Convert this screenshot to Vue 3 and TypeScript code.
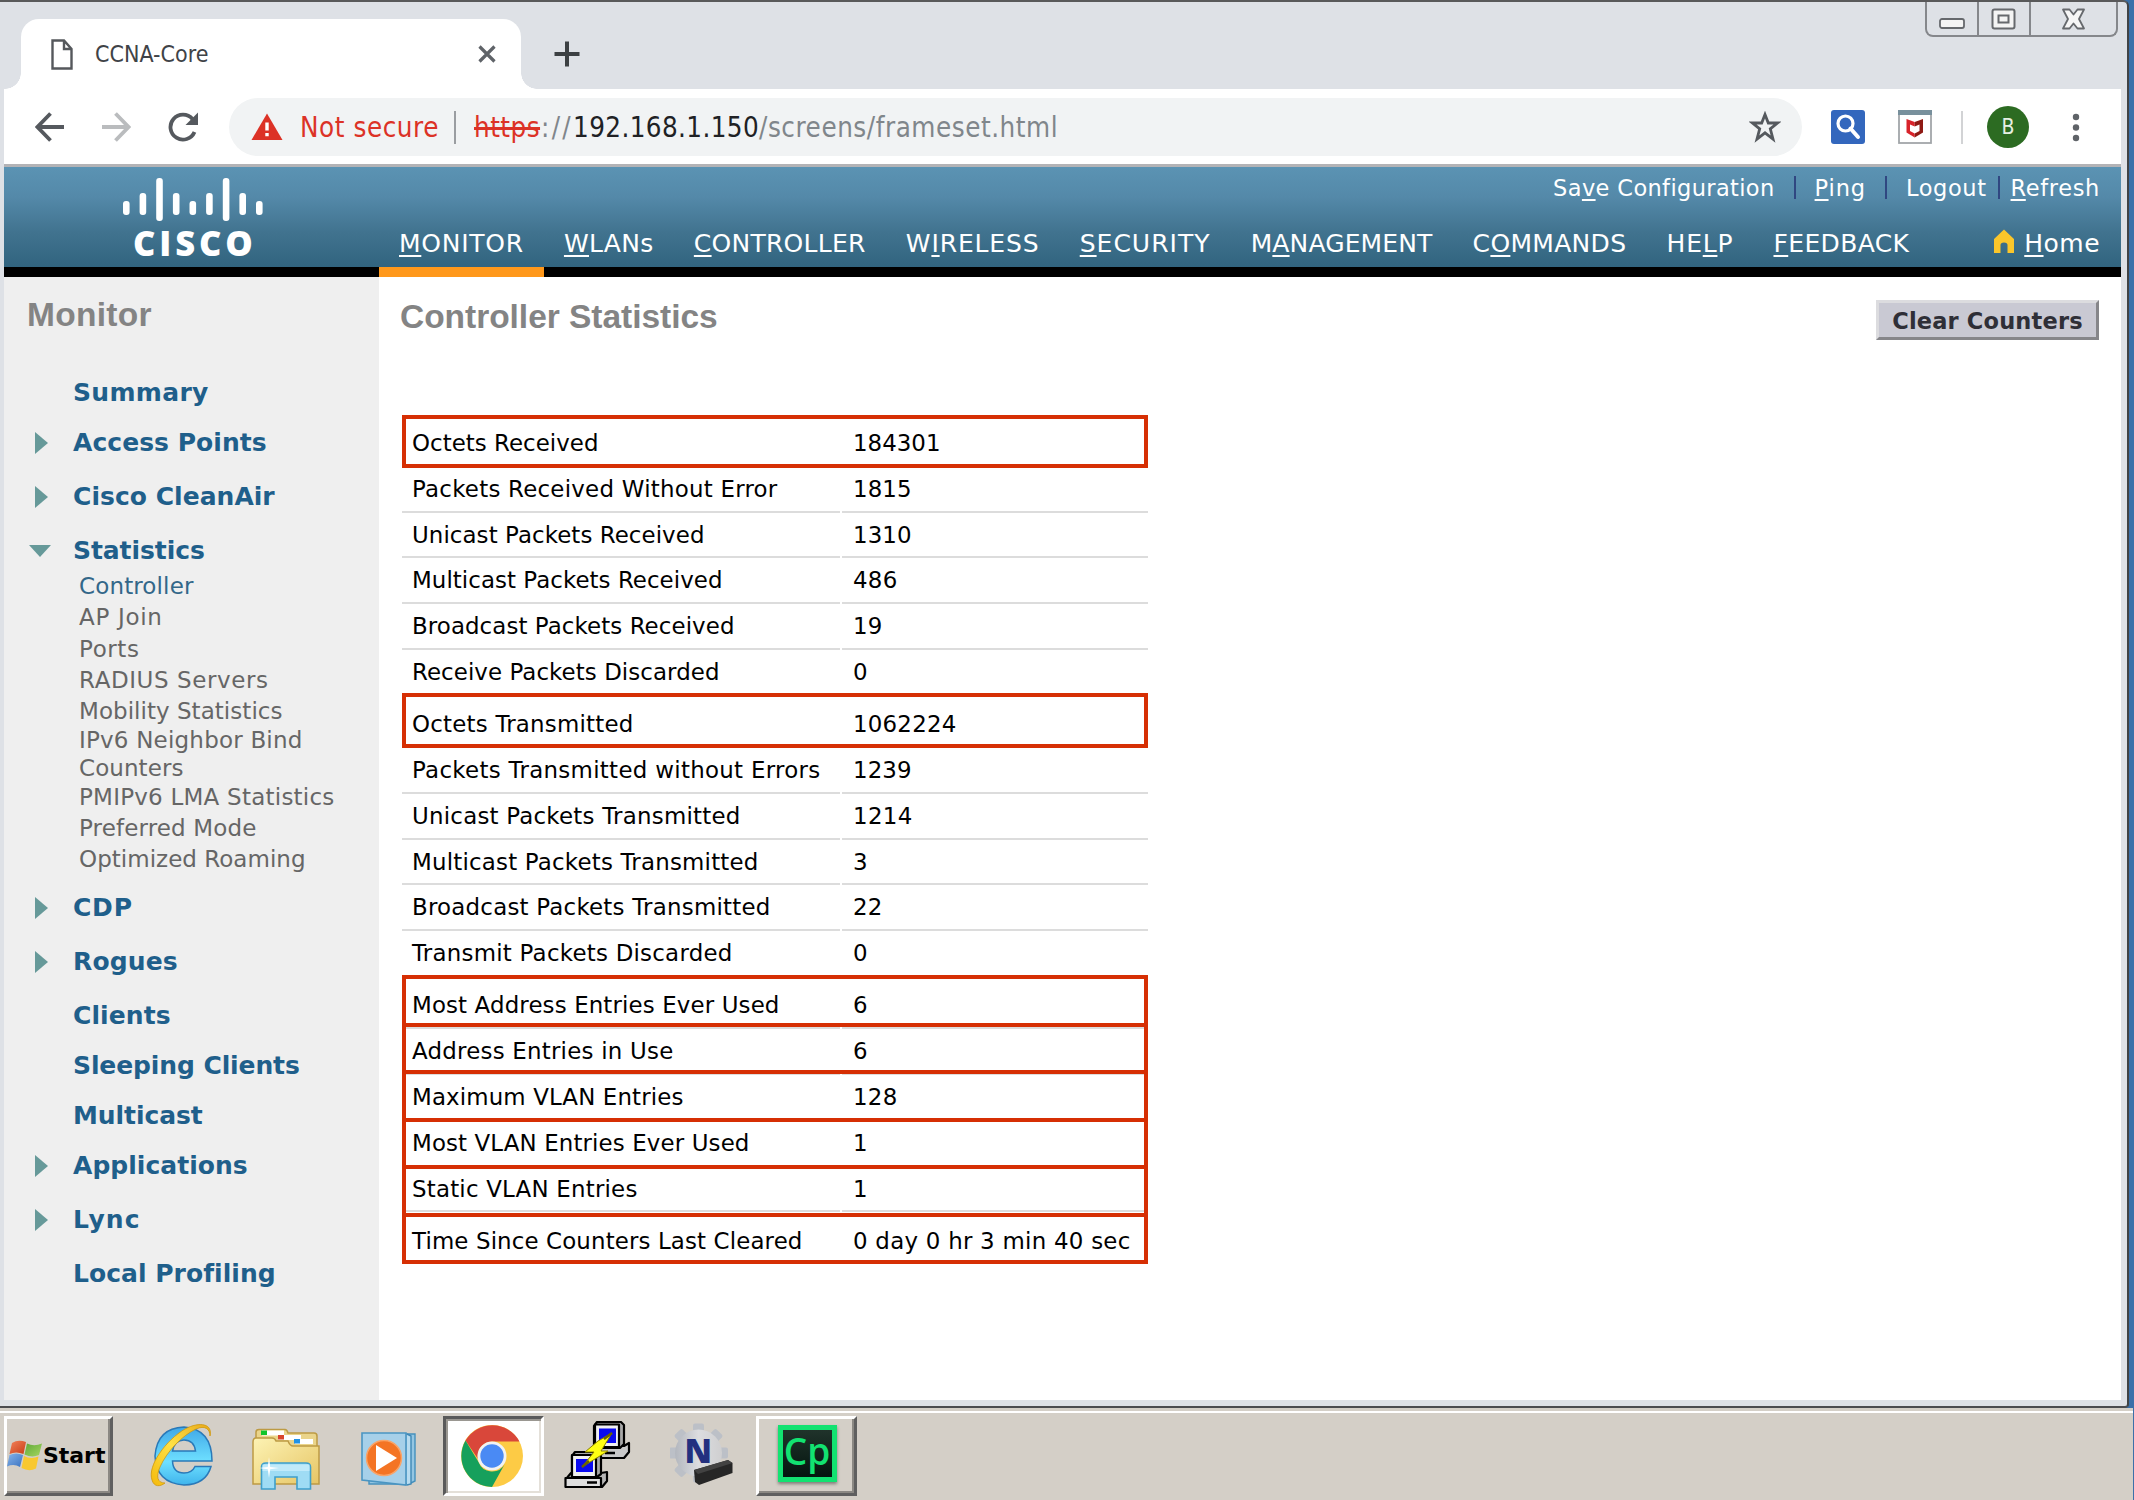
<script setup lang="ts">
interface Keyed { pre: string; key: string; post: string; width: number }
interface SideItem { label: string; width: number; kind: 'leaf' | 'closed' | 'open' }
interface Row { label: string; labelWidth: number; value: string; valueWidth: number; gap?: boolean }

// Tracks a label in or out so that its glyphs span the given number of pixels.
const vFit = {
  mounted(el: HTMLElement, binding: { value: number }) {
    const size = parseFloat(getComputedStyle(el).fontSize)
    const target = binding.value + size * 0.11
    const count = (el.textContent ?? '').length
    const natural = el.getBoundingClientRect().width
    el.style.letterSpacing = `${(target - natural) / count}px`
  },
}

const nav: Keyed[] = [
  { pre: '', key: 'M', post: 'ONITOR', width: 122 },
  { pre: '', key: 'W', post: 'LANs', width: 87 },
  { pre: '', key: 'C', post: 'ONTROLLER', width: 169 },
  { pre: 'W', key: 'I', post: 'RELESS', width: 131 },
  { pre: '', key: 'S', post: 'ECURITY', width: 128 },
  { pre: 'M', key: 'A', post: 'NAGEMENT', width: 179 },
  { pre: 'C', key: 'O', post: 'MMANDS', width: 151 },
  { pre: 'HE', key: 'L', post: 'P', width: 64 },
  { pre: '', key: 'F', post: 'EEDBACK', width: 133 },
]

const sideTop: SideItem[] = [
  { label: 'Summary', width: 133, kind: 'leaf' },
  { label: 'Access Points', width: 191, kind: 'closed' },
  { label: 'Cisco CleanAir', width: 199, kind: 'closed' },
  { label: 'Statistics', width: 129, kind: 'open' },
]
const sideBottom: SideItem[] = [
  { label: 'CDP', width: 57, kind: 'closed' },
  { label: 'Rogues', width: 102, kind: 'closed' },
  { label: 'Clients', width: 95, kind: 'leaf' },
  { label: 'Sleeping Clients', width: 224, kind: 'leaf' },
  { label: 'Multicast', width: 127, kind: 'leaf' },
  { label: 'Applications', width: 172, kind: 'closed' },
  { label: 'Lync', width: 65, kind: 'closed' },
  { label: 'Local Profiling', width: 199, kind: 'leaf' },
]
const subItems = [
  { lines: [{ t: 'Controller', w: 112 }], active: true },
  { lines: [{ t: 'AP Join', w: 81 }] },
  { lines: [{ t: 'Ports', w: 58 }] },
  { lines: [{ t: 'RADIUS Servers', w: 187 }] },
  { lines: [{ t: 'Mobility Statistics', w: 201 }] },
  { lines: [{ t: 'IPv6 Neighbor Bind', w: 221 }, { t: 'Counters', w: 102 }] },
  { lines: [{ t: 'PMIPv6 LMA Statistics', w: 253 }] },
  { lines: [{ t: 'Preferred Mode', w: 175 }] },
  { lines: [{ t: 'Optimized Roaming', w: 224 }] },
]

const rows: Row[] = [
  { label: 'Octets Received', labelWidth: 184, value: '184301', valueWidth: 85 },
  { label: 'Packets Received Without Error', labelWidth: 363, value: '1815', valueWidth: 56 },
  { label: 'Unicast Packets Received', labelWidth: 290, value: '1310', valueWidth: 56 },
  { label: 'Multicast Packets Received', labelWidth: 308, value: '486', valueWidth: 42 },
  { label: 'Broadcast Packets Received', labelWidth: 320, value: '19', valueWidth: 27 },
  { label: 'Receive Packets Discarded', labelWidth: 305, value: '0', valueWidth: 13 },
  { label: 'Octets Transmitted', labelWidth: 219, value: '1062224', valueWidth: 101, gap: true },
  { label: 'Packets Transmitted without Errors', labelWidth: 406, value: '1239', valueWidth: 56 },
  { label: 'Unicast Packets Transmitted', labelWidth: 326, value: '1214', valueWidth: 57 },
  { label: 'Multicast Packets Transmitted', labelWidth: 344, value: '3', valueWidth: 13 },
  { label: 'Broadcast Packets Transmitted', labelWidth: 356, value: '22', valueWidth: 27 },
  { label: 'Transmit Packets Discarded', labelWidth: 318, value: '0', valueWidth: 13 },
  { label: 'Most Address Entries Ever Used', labelWidth: 365, value: '6', valueWidth: 13, gap: true },
  { label: 'Address Entries in Use', labelWidth: 259, value: '6', valueWidth: 13 },
  { label: 'Maximum VLAN Entries', labelWidth: 269, value: '128', valueWidth: 42 },
  { label: 'Most VLAN Entries Ever Used', labelWidth: 335, value: '1', valueWidth: 13 },
  { label: 'Static VLAN Entries', labelWidth: 223, value: '1', valueWidth: 13 },
  { label: 'Time Since Counters Last Cleared', labelWidth: 388, value: '0 day 0 hr 3 min 40 sec', valueWidth: 275, gap: true },
]

// Red call-outs drawn over the table, relative to its top edge.
const marks = [
  { top: -6, height: 53 },
  { top: 272, height: 55 },
  { top: 554, height: 52 },
  { top: 602, height: 51 },
  { top: 649, height: 52 },
  { top: 697, height: 51 },
  { top: 744, height: 52 },
  { top: 792, height: 51 },
]

const logoBars = [
  { x: 0, y: 23, h: 14 }, { x: 16.6, y: 15, h: 22 }, { x: 33.2, y: 0, h: 43 },
  { x: 49.9, y: 15, h: 22 }, { x: 66.5, y: 23, h: 14 }, { x: 83.1, y: 15, h: 22 },
  { x: 99.8, y: 0, h: 43 }, { x: 116.4, y: 15, h: 22 }, { x: 133, y: 23, h: 14 },
]
const teeth = [0, 45, 90, 135, 180, 225, 270, 315]
</script>

<template>
  <div class="desktop">
    <div class="window">
      <div class="tabstrip">
        <div class="tab">
          <svg class="doc" width="22" height="31" viewBox="0 0 22 31"><path d="M1.5 1.5H13L20.5 10V29.5H1.5Z M13 1.5V10H20.5" fill="none" stroke="#55585c" stroke-width="2.4" /></svg>
          <span class="tab-title" v-fit="111">CCNA-Core</span>
          <svg class="tab-close" width="18" height="18" viewBox="0 0 18 18"><path d="M1.5 1.5L16.5 16.5M16.5 1.5L1.5 16.5" stroke="#5f6368" stroke-width="3.2" /></svg>
        </div>
        <svg class="plus" width="26" height="26" viewBox="0 0 26 26"><path d="M13 0.5V25.5M0.5 13H25.5" stroke="#3c4043" stroke-width="4" /></svg>
        <div class="win-buttons">
          <span class="wb"><svg width="26" height="12" viewBox="0 0 26 12"><rect x="1" y="1" width="24" height="9" rx="2" fill="#f4f4f4" stroke="#66696d" stroke-width="1.8" /></svg></span>
          <span class="wb wb-max"><svg width="26" height="22" viewBox="0 0 26 22"><rect x="1.5" y="1.5" width="22" height="19" rx="2" fill="#f4f4f4" stroke="#66696d" stroke-width="2" /><rect x="7.500" y="7.5" width="10" height="7" fill="#f4f4f4" stroke="#66696d" stroke-width="2" /></svg></span>
          <span class="wb wb-close"><svg width="26" height="22" viewBox="0 0 26 22"><path d="M2 1.500H8.500L12.500 6.500L16.500 1.500H23L18 11L23 20.500H16.500L12.500 15.500L8.500 20.500H2L7 11Z" fill="#f6f6f6" stroke="#66696d" stroke-width="1.8" stroke-linejoin="round" /></svg></span>
        </div>
      </div>

      <div class="toolbar">
        <svg class="nav-ico" width="30" height="30" viewBox="0 0 30 30"><path d="M29 15H3M15.500 1.500L2.500 15L15.500 28.500" fill="none" stroke="#55595e" stroke-width="3.800" /></svg>
        <svg class="nav-ico fwd" width="30" height="30" viewBox="0 0 30 30"><path d="M1 15H27M14.500 1.500L27.500 15L14.500 28.500" fill="none" stroke="#babcbe" stroke-width="3.800" /></svg>
        <svg class="nav-ico reload" width="31" height="31" viewBox="0 0 31 31"><path d="M26.500 20A12.500 12.500 0 1 1 24.500 7" fill="none" stroke="#55595e" stroke-width="3.800" /><path d="M30 0.500V13H17.500Z" fill="#55595e" /></svg>
        <div class="omnibox">
          <svg class="warn" width="32" height="28" viewBox="0 0 32 28"><path d="M16 0.500L31.500 27H0.500Z" fill="#dc3226" /><path d="M14.300 9.500H17.700V17.500H14.300ZM14.300 20H17.700V23.300H14.300Z" fill="#fff" /></svg>
          <span class="insecure" v-fit="136">Not secure</span>
          <i class="omni-sep"></i>
          <span class="scheme" v-fit="63"><s>https</s></span><span class="url-dim" v-fit="29">://</span><span class="url-host" v-fit="183">192.168.1.150</span><span class="url-dim" v-fit="296">/screens/frameset.html</span>
          <svg class="star" width="32" height="32" viewBox="0 0 32 32"><path d="M16 3.500L19.300 12H28.500L21.300 17.800L24 28L16 21.800L8 28L10.700 17.800L3.500 12H12.700Z" fill="none" stroke="#55595e" stroke-width="2.800" /></svg>
        </div>
        <svg class="ext-search" width="34" height="34" viewBox="0 0 34 34"><rect width="34" height="34" rx="3" fill="#3367bd" /><circle cx="14.500" cy="13.500" r="7.500" fill="none" stroke="#fff" stroke-width="3.200" /><path d="M19.500 18.500L27 27" stroke="#fff" stroke-width="4" stroke-linecap="round" /></svg>
        <svg class="ext-shield" width="34" height="34" viewBox="0 0 34 34"><rect x="1" y="1" width="32" height="32" fill="#fff" stroke="#a2a6a9" stroke-width="1.800" /><rect x="0" y="0" width="34" height="5" fill="#78909c" /><path d="M8.500 9L16.700 12V27.500L8.500 22.500Z" fill="#d8232a" /><path d="M25 9L16.700 12V27.500L25 22.500Z" fill="#8f1a14" /><path d="M12 14.500L16.700 16.500L21.500 14.500V21L16.700 23.500L12 21Z" fill="#fff" /></svg>
        <i class="tool-sep"></i>
        <span class="avatar">B</span>
        <svg class="dots" width="8" height="30" viewBox="0 0 8 30"><g fill="#5f6368"><circle cx="4" cy="5" r="3.200" /><circle cx="4" cy="15.500" r="3.200" /><circle cx="4" cy="26" r="3.200" /></g></svg>
      </div>

      <header class="banner">
        <div class="brand">
          <svg width="140" height="44" viewBox="0 0 140 44"><rect v-for="b in logoBars" :key="b.x" :x="b.x" :y="b.y" width="6.600" :height="b.h" rx="3" fill="#fff" /></svg>
          <span class="brand-name" v-fit="120">CISCO</span>
        </div>
        <div class="banner-main">
          <div class="links">
            <span v-fit="219">Sa<u>v</u>e Configuration</span><i></i>
            <span v-fit="49"><u>P</u>ing</span><i></i>
            <span v-fit="78">Logout</span><i class="tight"></i>
            <span v-fit="87"><u>R</u>efresh</span>
          </div>
          <nav class="nav">
            <span v-for="n in nav" :key="n.key + n.post" v-fit="n.width">{{ n.pre }}<u>{{ n.key }}</u>{{ n.post }}</span>
            <svg class="house" width="22" height="25" viewBox="0 0 22 25"><path d="M11 0.500L21 10V24H14.500V16Q14.500 13.500 11 13.500Q7.500 13.500 7.500 16V24H1V10Z" fill="#fbc62b" /></svg>
            <span v-fit="73"><u>H</u>ome</span>
          </nav>
        </div>
      </header>
      <div class="strip"><i></i></div>

      <div class="page">
        <aside class="sidebar">
          <h2 v-fit="121">Monitor</h2>
          <div class="menu">
            <div v-for="s in sideTop" :key="s.label" class="item" :class="s.kind">
              <i class="arrow"></i><span v-fit="s.width">{{ s.label }}</span>
            </div>
            <div class="subs">
              <div v-for="s in subItems" :key="s.lines[0].t" class="sub" :class="{ active: s.active, wrapped: s.lines.length > 1 }">
                <div v-for="l in s.lines" :key="l.t"><span v-fit="l.w">{{ l.t }}</span></div>
              </div>
            </div>
            <div v-for="s in sideBottom" :key="s.label" class="item" :class="s.kind">
              <i class="arrow"></i><span v-fit="s.width">{{ s.label }}</span>
            </div>
          </div>
        </aside>

        <main class="content">
          <div class="heading">
            <h1 v-fit="314">Controller Statistics</h1>
            <button class="clear"><span v-fit="188">Clear Counters</span></button>
          </div>
          <div class="stats">
            <div v-for="r in rows" :key="r.label" class="row" :class="{ gap: r.gap }">
              <div class="cell name"><span v-fit="r.labelWidth">{{ r.label }}</span></div>
              <div class="cell value"><span v-fit="r.valueWidth">{{ r.value }}</span></div>
            </div>
            <div v-for="m in marks" :key="m.top" class="mark" :style="{ top: m.top + 'px', height: m.height + 'px' }"></div>
          </div>
        </main>
      </div>
    </div>

    <div class="taskbar">
      <button class="start">
        <svg width="36" height="32" viewBox="0 0 36 32">
          <defs>
            <linearGradient id="flagRed" x1="0" y1="0" x2="1" y2="1"><stop offset="0" stop-color="#f2825a" /><stop offset="1" stop-color="#c93d17" /></linearGradient>
            <linearGradient id="flagGreen" x1="0" y1="0" x2="1" y2="1"><stop offset="0" stop-color="#5fa83a" /><stop offset="1" stop-color="#a5d65f" /></linearGradient>
            <linearGradient id="flagBlue" x1="0" y1="0" x2="1" y2="1"><stop offset="0" stop-color="#86b4ea" /><stop offset="1" stop-color="#3a72c0" /></linearGradient>
          </defs>
          <path d="M5 4Q11 0 19 3L16.500 15Q9 12 2.500 15Z" fill="url(#flagRed)" />
          <path d="M20 4.500Q27 8 35 4.500L32 16Q25 19 17.500 15.500Z" fill="url(#flagGreen)" />
          <path d="M2.500 16Q9 13 16 16L13 28Q7 24.500 0 27.500Z" fill="url(#flagBlue)" />
          <path d="M17 17Q24 20.500 31.500 17.500L29 29.500Q22 33 14.500 29Z" fill="#f8c830" />
        </svg>
        <span v-fit="60">Start</span>
      </button>

      <svg class="ie" width="64" height="66" viewBox="0 0 64 66">
        <defs>
          <linearGradient id="ieBlue" x1="0" y1="0" x2="0" y2="1"><stop offset="0" stop-color="#3fa8e8" /><stop offset="0.6" stop-color="#6fe0ff" /><stop offset="1" stop-color="#3fb4ec" /></linearGradient>
          <linearGradient id="ieGold" x1="0" y1="1" x2="1" y2="0"><stop offset="0" stop-color="#f4b90c" /><stop offset="0.5" stop-color="#ffe145" /><stop offset="1" stop-color="#e8a91a" /></linearGradient>
        </defs>
        <path d="M62 39H22.500Q23 51 34 51Q42 51 45 44.500H61Q56 62.500 34 63Q6 61 5 34Q7 6 34 5Q62 7 62 39ZM22.500 29H45.500Q44 18 34 18Q24.500 18 22.500 29Z" fill="url(#ieBlue)" stroke="#2a79b8" stroke-width="1.500" />
        <path d="M60 14C63 2 50 -1 35 7C16 18 -3 44 2 58C4 65 10 65 15 61C7 61 6 54 10 45C17 29 33 13 46 7C55 3 60 7 60 14Z" fill="url(#ieGold)" stroke="#cf980e" stroke-width="0.800" />
      </svg>

      <svg class="folder" width="68" height="63" viewBox="0 0 68 63">
        <defs><linearGradient id="fold" x1="0" y1="0" x2="1" y2="1"><stop offset="0" stop-color="#fdf3b4" /><stop offset="1" stop-color="#e6c565" /></linearGradient></defs>
        <path d="M4 12V4Q4 1.500 7 1.500H33Q35 1.500 36 5H62Q65 5 65 8V20H4Z" fill="#ead48a" stroke="#bd9b44" stroke-width="1.500" />
        <rect x="10" y="2.500" width="22" height="5" fill="#fff" /><rect x="9" y="2.500" width="6" height="4.500" fill="#12c52b" />
        <rect x="26" y="7" width="23" height="5" fill="#fff" /><rect x="26" y="7" width="6" height="4.500" fill="#d9452d" />
        <path d="M1 14Q1 10 4 10H20Q23 10 24 13H36Q38 18 41 18H67V56H1Z" fill="url(#fold)" stroke="#bd9b44" stroke-width="1.500" />
        <rect x="43" y="11" width="18" height="5" fill="#fff" /><rect x="42" y="11" width="6" height="4.500" fill="#2193e6" />
        <path d="M9.500 61V39Q9.500 35 14 35H54Q58.500 35 58.500 39V61H45V49H23V61Z" fill="#9fdcf4" stroke="#3e9fcb" stroke-width="1.600" />
        <path d="M10.500 36.500H57.500V43H10.500Z" fill="#c8eefb" opacity="0.800" />
        <path d="M17 29L18.200 39L27 40L18.200 41.200L17 50L15.800 41.200L7 40L15.800 39Z" fill="#fff" />
      </svg>

      <svg class="wmp" width="64" height="56" viewBox="0 0 64 56">
        <path d="M8 3H54V50L48 53H8Z" fill="#94c6e2" stroke="#4591bd" stroke-width="1.400" />
        <path d="M46 3L50 5V53L46 54" fill="#b8dcf0" stroke="#3f88b6" stroke-width="1.400" />
        <path d="M1 2H45V54L1 49Z" fill="#a6d0e9" stroke="#4a95c2" stroke-width="1.600" />
        <circle cx="23" cy="27" r="17.500" fill="#f47424" stroke="#f9a468" stroke-width="1.500" />
        <path d="M15 14L36 27L15 40Z" fill="#fff" />
      </svg>

      <span class="task pressed">
        <svg width="64" height="64" viewBox="-32 -32 64 64">
          <circle r="31" fill="#fdcb45" />
          <path d="M-26.500 -15.500A31 31 0 0 1 27.500 -14.500H0A14.500 14.500 0 0 0 -14 3Z" fill="#d9473a" />
          <path d="M-26.500 -15.500A31 31 0 0 0 0 31L12.800 8A14.500 14.500 0 0 1 -13.500 6Z" fill="#16a05c" />
          <circle r="14.500" fill="#f2f2f2" /><circle r="11.700" fill="#4a8af4" />
        </svg>
      </span>

      <svg class="putty" width="68" height="68" viewBox="0 0 68 68">
        <g stroke="#000" stroke-width="2.200" stroke-linejoin="round">
          <path d="M27 43V35L32 28L34 25H60L65 22V31L60 37H30Z" fill="#c9c9c9" />
          <path d="M30 5L33 1H57L60 4V23L56 27H30Z" fill="#a9a9a9" />
          <path d="M31 3.500H55V26H31Z" fill="#f0f0f0" />
          <path d="M2 58L7 52H37L43 51V60L38 66H3Z" fill="#b5b5b5" />
          <path d="M8 35L11 31H34L37 34V53L33 56H8Z" fill="#a9a9a9" />
          <path d="M8 34H32V56H8Z" fill="#f0f0f0" />
          <path d="M1.500 57H37V66H1.500Z" fill="#dedede" />
        </g>
        <path d="M35 7.500H52V22H35ZM12 38H29V51H12Z" fill="#0a0af0" />
        <path d="M23 61.500H33M41 32H51" stroke="#000" stroke-width="2.400" />
        <path d="M48 12L34 20L21 31H30L18 46L44 30H37Z" fill="#ffff12" stroke="#8a8000" stroke-width="1" />
        <path d="M40 18L48 12M18 46L25 40" stroke="#6b6200" stroke-width="2.400" />
      </svg>

      <svg class="gear" width="64" height="64" viewBox="0 0 64 64">
        <defs><linearGradient id="gearFill" x1="0" y1="0" x2="1" y2="0"><stop offset="0" stop-color="#b3b7be" /><stop offset="0.5" stop-color="#dcdde0" /><stop offset="1" stop-color="#cfcfd0" /></linearGradient></defs>
        <rect v-for="t in teeth" :key="t" x="23" y="0.500" width="11" height="14" rx="2" fill="#bcc0c7" :transform="`rotate(${t} 28.500 30)`" />
        <circle cx="28.500" cy="30" r="23.500" fill="url(#gearFill)" />
        <text x="14.500" y="39.500" font-family="Open Sans, sans-serif" font-size="33" font-weight="800" fill="#23307f">N</text>
        <path d="M24 47L58 37L62.500 40V50L29 62L25 59Z" fill="#262626" /><path d="M24 47L58 37L62.500 40L28 51Z" fill="#424242" />
      </svg>

      <span class="task raised"><span class="cp">Cp</span></span>
    </div>
  </div>
</template>

<style>
body { margin: 0; overflow: hidden; }
</style>

<style scoped>
.desktop {
  width: 2134px; height: 1500px; background: #3b70a9; overflow: hidden;
  display: flex; flex-direction: column; box-sizing: border-box;
  font-family: "DejaVu Sans", Verdana, sans-serif;
}
.desktop * { box-sizing: border-box; }
span { white-space: nowrap; }
svg { display: block; flex: none; }
h1, h2 { margin: 0; }
u { text-decoration-thickness: 2px; text-underline-offset: 3px; }

.window {
  width: 2129px; height: 1408px; flex: none; background: #dee1e6;
  border-top: 2px solid #59595a; border-right: 2px solid #414345; border-bottom: 2px solid #4b4c4f;
  border-radius: 0 6px 4px 0;
  padding: 0 6px 6px 4px; display: flex; flex-direction: column;
}

.tabstrip { height: 87px; flex: none; display: flex; align-items: flex-start; }
.tab {
  position: relative; margin: 17px 0 0 17px; width: 500px; height: 70px; background: #fff;
  border-radius: 18px 18px 0 0; display: flex; align-items: center; padding: 0 25px 0 30px;
}
.tab::before, .tab::after { content: ""; position: absolute; bottom: 0; width: 16px; height: 16px; }
.tab::before { left: -16px; background: radial-gradient(circle at 0 0, transparent 15.5px, #fff 16px); }
.tab::after { right: -16px; background: radial-gradient(circle at 100% 0, transparent 15.5px, #fff 16px); }
.tab-title {
  margin-left: 22px; font-size: 23px; color: #3f4347;
  font-family: "DejaVu Sans Condensed", "DejaVu Sans", sans-serif; font-stretch: condensed;
}
.tab-close { margin-left: auto; }
.plus { margin: 39px 0 0 33px; }
.win-buttons {
  margin-left: auto; margin-right: 3px; width: 193px; height: 35px; display: flex;
  border: 2px solid #85878b; border-top: 0; border-radius: 0 0 8px 8px;
}
.wb { width: 50px; display: flex; align-items: flex-end; justify-content: center; padding-bottom: 5px; }
.wb-max { width: 54px; border: 2px solid #85878b; border-width: 0 2px; align-items: center; padding: 0; }
.wb-close { flex: 1; align-items: center; padding: 0; }

.toolbar {
  height: 78px; flex: none; background: #fff; border-bottom: 3px solid #b3b3b6;
  display: flex; align-items: center; padding: 1px 41px 0 31px;
  font-family: "DejaVu Sans Condensed", "DejaVu Sans", sans-serif; font-stretch: condensed;
}
.fwd { margin-left: 36px; }
.reload { margin-left: 37px; }
.omnibox {
  margin-left: 30px; width: 1573px; height: 58px; background: #f1f3f4; border-radius: 29px;
  display: flex; align-items: center; padding: 0 22px; font-size: 27.5px;
}
.warn { margin-bottom: 1px; }
.insecure { color: #dc3226; margin-left: 17px; }
.omni-sep { width: 2px; height: 33px; background: #9a9da1; margin: 0 18px 0 15px; }
.scheme { color: #dc3226; margin-right: 1px; }
.scheme s { text-decoration-thickness: 2.5px; }
.url-dim { color: #80868b; }
.url-host { color: #202124; }
.star { margin-left: auto; margin-right: -1px; }
.ext-search { margin-left: 28.5px; }
.ext-shield { margin-left: 33px; }
.tool-sep { width: 2px; height: 33px; background: #d2d3d5; margin-left: 29px; }
.avatar {
  width: 42px; height: 42px; border-radius: 50%; background: #2c6b22; color: #e6f0e4;
  font-size: 21px; line-height: 42px; text-align: center; margin-left: 24.5px;
}
.dots { margin-left: auto; }

.banner {
  height: 100px; flex: none; display: flex; color: #fff;
  background: linear-gradient(#5b93b3 0%, #5489a9 30%, #41738f 65%, #31647f 100%);
}
.brand { width: 375px; padding: 11px 0 0 119px; }
.brand-name {
  display: inline-block; margin: 1px 0 0 10px; font: 800 34.5px/40px "Open Sans", sans-serif;
}
.banner-main { flex: 1; padding: 0 21px 0 20px; }
.links { height: 41px; display: flex; align-items: center; justify-content: flex-end; font-size: 22.5px; }
.links i { width: 2px; height: 23px; background: #2c3f7c; margin: 0 19px 0 19px; opacity: 0.9; }
.links i.tight { margin: 0 11px 0 11px; }
.nav { height: 59px; padding-top: 11px; display: flex; align-items: center; font-size: 25px; gap: 40.2px; }
.house { margin: -4px -31px 0 auto; }
.strip { height: 10px; flex: none; background: #000; padding-left: 375px; }
.strip i { display: block; width: 165px; height: 10px; background: #ff981b; }

.page { flex: 1; min-height: 0; display: flex; background: #fff; }
.sidebar { width: 375px; background: #efefef; padding-top: 18px; }
h2 { width: max-content; margin-left: 23px; font: bold 33.5px/40px "Liberation Sans", Arial, sans-serif; color: #848484; }
.menu { margin-top: 43px; }
.item { display: flex; height: 50px; font-weight: bold; font-size: 25px; line-height: 30px; color: #1f5f8b; }
.closed { height: 54px; }
.open { height: 35px; }
.item .arrow { width: 69px; flex: none; padding: 4px 0 0 31px; }
.closed .arrow::before {
  content: ""; display: block; width: 0; border: 11px solid transparent;
  border-left: 13px solid #669999; border-right: 0;
}
.open .arrow { padding: 9px 0 0 25px; }
.open .arrow::before {
  content: ""; display: block; width: 0; border: 11px solid transparent;
  border-top: 12px solid #669999; border-bottom: 0;
}
.subs { margin: 0 0 17.6px 75px; font-size: 23px; line-height: 31.3px; color: #666; }
.sub.active { color: #336789; }
.sub.wrapped { line-height: 27.2px; }

.content { flex: 1; padding: 18px 22px 0 20px; }
.heading { display: flex; justify-content: space-between; align-items: flex-start; height: 126px; }
h1 { font: bold 33.5px/44px "Liberation Sans", Arial, sans-serif; color: #848484; margin-left: 1px; }
.clear {
  width: 223px; height: 40px; margin-top: 5px; padding: 2px 0 0; background: #c9c9d3; color: #2f2f37;
  border: 3px solid; border-color: #dcdcdf #86868a #86868a #dcdcdf;
  font: bold 22.5px/30px "DejaVu Sans", Verdana, sans-serif; text-align: center;
}
.stats { position: relative; width: 746px; margin-left: 3px; font-size: 22.9px; color: #000; }
.row { display: flex; justify-content: space-between; height: 45.83px; }
.row.gap { margin-top: 6.2px; }
.cell { border-bottom: 2px solid #dcdcdc; line-height: 45px; padding-left: 10px; }
.name { width: 438px; }
.value { width: 306px; padding-left: 11px; }
.row:nth-child(6) .cell, .row:nth-child(12) .cell, .row:nth-child(18) .cell { border-color: transparent; }
.mark { position: absolute; left: 0; width: 746px; border: 4px solid #d62f04; }

.taskbar {
  flex: 1; width: 2133px; background: #d4cfc7; border-top: 3px solid #d4cfc7; position: relative;
  display: flex; align-items: flex-start; padding: 0 0 0 4px;
}
.taskbar::before { content: ""; position: absolute; left: 0; right: 0; top: 0; height: 2px; background: #fff; }
.start, .task {
  border: 3px solid; border-color: #fff #5f5f5f #5f5f5f #fff; background: #d4cfc7; margin-top: 5px; height: 80px;
  display: flex; align-items: center;
}
.start {
  width: 109px; padding: 0 0 2px; gap: 0; font: bold 22px "DejaVu Sans", Tahoma, sans-serif; color: #000;
  box-shadow: inset -2px -2px #8b8883;
}
.ie { margin: 11px 0 0 37px; }
.folder { margin: 17px 0 0 38px; }
.wmp { margin: 20px 0 0 41px; }
.task { width: 101px; justify-content: center; }
.pressed {
  margin-left: 18px; padding: 0 3px 1px 0; background: #fff; border-color: #5a5a5a #fff #fff #5a5a5a;
  box-shadow: inset 2px 2px #9a9791, inset -2px -2px #e4e0d9;
}
.putty { margin: 10px 0 0 20px; }
.gear { margin: 12px 0 0 38px; }
.raised { margin-left: 22px; box-shadow: inset -2px -2px #8b8883; }
.cp {
  width: 59px; height: 57px; margin: -6px 0 0 1px; border: 5px solid #12e271; background: linear-gradient(#20332b, #04150f);
  color: #12e271; font: 600 37px/41px "Open Sans", sans-serif; text-align: center; box-shadow: 0 2px 3px rgba(0, 0, 0, 0.4);
}
</style>
